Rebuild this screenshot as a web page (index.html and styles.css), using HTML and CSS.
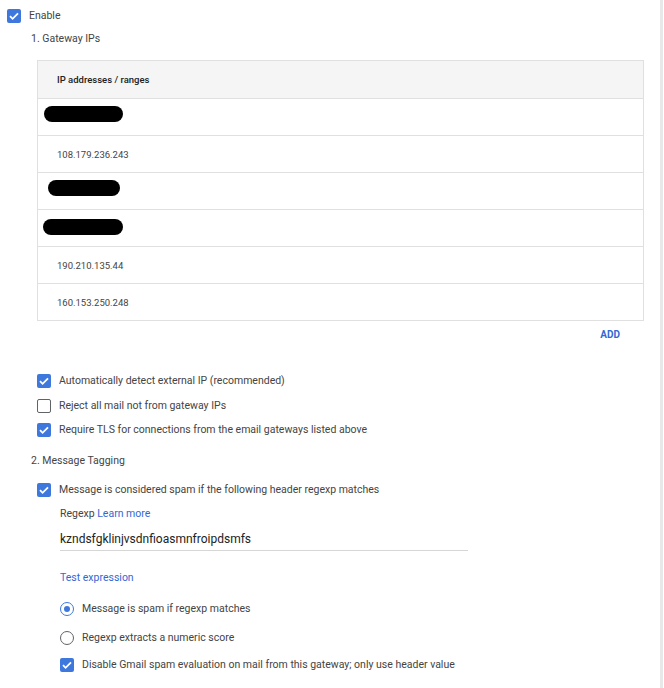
FILE: index.html
```html
<!DOCTYPE html>
<html>
<head>
<meta charset="utf-8">
<link rel="stylesheet" href="styles.css">
</head>
<body>
<div class="page">
  <div class="row enable">
    <span class="cb on"><svg viewBox="0 0 14 14"><path d="M3 7.2l2.6 2.6L11 4.4" fill="none" stroke="#fff" stroke-width="1.8"/></svg></span>
    <span class="label">Enable</span>
  </div>
  <div class="heading h1">1. Gateway IPs</div>

  <div class="table">
    <div class="thead">IP addresses / ranges</div>
    <div class="tr"><span class="pill p1"></span></div>
    <div class="tr">108.179.236.243</div>
    <div class="tr"><span class="pill p3"></span></div>
    <div class="tr"><span class="pill p4"></span></div>
    <div class="tr">190.210.135.44</div>
    <div class="tr last">160.153.250.248</div>
  </div>
  <div class="addrow"><span class="add">ADD</span></div>

  <div class="row opt o1">
    <span class="cb on"><svg viewBox="0 0 14 14"><path d="M3 7.2l2.6 2.6L11 4.4" fill="none" stroke="#fff" stroke-width="1.8"/></svg></span>
    <span class="label">Automatically detect external IP (recommended)</span>
  </div>
  <div class="row opt o2">
    <span class="cb off"></span>
    <span class="label">Reject all mail not from gateway IPs</span>
  </div>
  <div class="row opt o3">
    <span class="cb on"><svg viewBox="0 0 14 14"><path d="M3 7.2l2.6 2.6L11 4.4" fill="none" stroke="#fff" stroke-width="1.8"/></svg></span>
    <span class="label">Require TLS for connections from the email gateways listed above</span>
  </div>

  <div class="heading h2">2. Message Tagging</div>
  <div class="row opt o4">
    <span class="cb on"><svg viewBox="0 0 14 14"><path d="M3 7.2l2.6 2.6L11 4.4" fill="none" stroke="#fff" stroke-width="1.8"/></svg></span>
    <span class="label">Message is considered spam if the following header regexp matches</span>
  </div>

  <div class="sub">
    <div class="regexp">Regexp <span class="link">Learn more</span></div>
    <div class="input">kzndsfgklinjvsdnfioasmnfroipdsmfs</div>
    <div class="test link">Test expression</div>

    <div class="row subopt r1">
      <span class="radio sel"><span class="dot"></span></span>
      <span class="label">Message is spam if regexp matches</span>
    </div>
    <div class="row subopt r2">
      <span class="radio"></span>
      <span class="label">Regexp extracts a numeric score</span>
    </div>
    <div class="row subopt r3">
      <span class="cb on"><svg viewBox="0 0 14 14"><path d="M3 7.2l2.6 2.6L11 4.4" fill="none" stroke="#fff" stroke-width="1.8"/></svg></span>
      <span class="label">Disable Gmail spam evaluation on mail from this gateway; only use header value</span>
    </div>
  </div>
</div>
</body>
</html>
```
FILE: styles.css
```css
html, body {
  margin: 0;
  padding: 0;
  background: #fff;
}
body {
  font-family: Roboto, "Liberation Sans", Arial, sans-serif;
  font-size: 10.5px;
  color: #444;
}
.page {
  width: 660px;
  height: 688px;
  border-right: 3px solid #e8e8e8;
  overflow: hidden;
}
.row {
  display: flex;
  align-items: center;
  height: 14px;
}
.label {
  line-height: 14px;
  white-space: nowrap;
}
.enable {
  margin-top: 9px;
  padding-left: 7px;
  gap: 8px;
}
.cb {
  width: 14px;
  height: 14px;
  box-sizing: border-box;
  border-radius: 2px;
  flex: none;
  display: block;
}
.cb svg {
  width: 14px;
  height: 14px;
  display: block;
}
.cb.on {
  background: #3f78dc;
}
.cb.off {
  border: 1.5px solid #5f6368;
  background: #fff;
}
.heading {
  height: 14px;
  line-height: 14px;
  padding-left: 31px;
}
.h1 { margin-top: 9px; }
.table {
  margin: 14px 0 0 37px;
  width: 607px;
  box-sizing: border-box;
  border: 1px solid #e0e0e0;
}
.thead {
  height: 37px;
  background: #f5f5f5;
  border-bottom: 1px solid #e0e0e0;
  display: flex;
  align-items: center;
  padding-left: 19px;
  font-size: 9.5px;
  font-weight: 500;
  color: #222;
}
.tr {
  height: 36px;
  border-bottom: 1px solid #e0e0e0;
  display: flex;
  align-items: center;
  padding-left: 19px;
  font-size: 9.5px;
  color: #444;
}
.tr.last { border-bottom: none; }
.pill {
  display: block;
  background: #000;
  height: 16px;
  border-radius: 8px;
}
.p1 { width: 79px; margin-left: -13px; margin-top: -7px; }
.p3 { width: 72px; margin-left: -9px; margin-top: -6px; }
.p4 { width: 80px; margin-left: -14px; margin-top: -2px; }
.addrow {
  display: flex;
  justify-content: flex-end;
  width: 620px;
  margin-top: 7px;
  height: 14px;
  line-height: 14px;
}
.add {
  color: #3367d6;
  font-weight: 700;
  font-size: 10px;
}
.opt {
  padding-left: 37px;
  gap: 8px;
}
.o1 { margin-top: 32px; }
.o2 { margin-top: 11px; }
.o3 { margin-top: 10px; }
.h2 { margin-top: 17px; }
.o4 { margin-top: 15px; }
.sub {
  padding-left: 60px;
}
.regexp {
  margin-top: 10px;
  height: 14px;
  line-height: 14px;
}
.link { color: #3367d6; }
.input {
  margin-top: 5px;
  width: 408px;
  height: 25px;
  box-sizing: border-box;
  border-bottom: 1px solid #d6d6d6;
  font-size: 12px;
  color: #222;
  line-height: 20px;
  padding-top: 3px;
}
.test {
  margin-top: 20px;
  height: 14px;
  line-height: 14px;
}
.subopt { gap: 8px; }
.r1 { margin-top: 17px; }
.r2 { margin-top: 15px; }
.r3 { margin-top: 13px; }
.radio {
  width: 14px;
  height: 14px;
  box-sizing: border-box;
  border-radius: 50%;
  border: 1.5px solid #5f6368;
  flex: none;
  display: flex;
  align-items: center;
  justify-content: center;
}
.radio.sel {
  border-color: #3f78dc;
}
.dot {
  width: 6px;
  height: 6px;
  border-radius: 50%;
  background: #3f78dc;
}
```
